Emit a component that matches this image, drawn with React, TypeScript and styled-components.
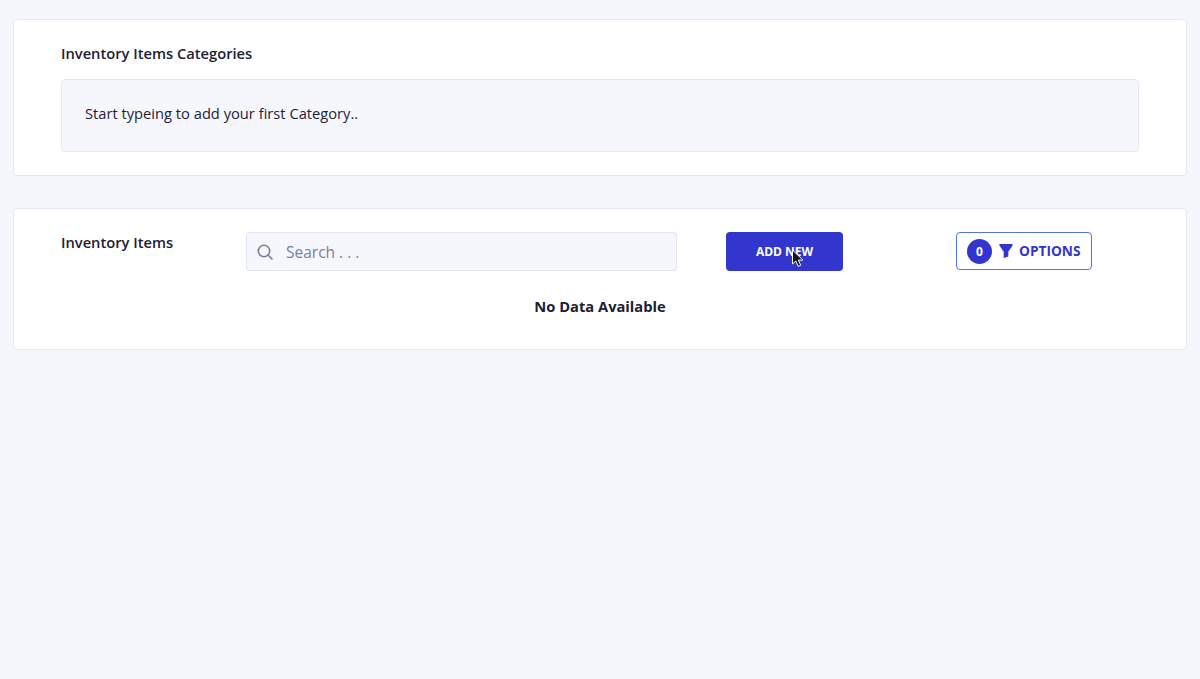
import React from 'react';
import styled, { createGlobalStyle } from 'styled-components';

const GlobalStyle = createGlobalStyle`
  html, body {
    margin: 0;
    height: 100%;
    background: #f6f7fc;
  }
  body {
    font-family: 'Open Sans', 'Noto Sans', sans-serif;
    color: #1c2033;
  }
`;

const Page = styled.div`
  box-sizing: border-box;
  height: 679px;
  padding: 19px 13px 0;
  display: flex;
  flex-direction: column;
  gap: 32px;
  overflow: hidden;
`;

const Card = styled.section<{ $height: number }>`
  box-sizing: border-box;
  height: ${(p) => p.$height}px;
  background: #fff;
  border: 1px solid #e6e8f4;
  border-radius: 4px;
  padding: 0 47px;
`;

const CardTitle = styled.h2`
  margin: 0;
  font-size: 14.7px;
  line-height: 20px;
  font-weight: 600;
  color: #1c2033;
`;

const CategoriesTitle = styled(CardTitle)`
  padding-top: 23px;
`;

const CategoryInput = styled.div`
  box-sizing: border-box;
  height: 73px;
  margin-top: 16px;
  padding: 0 23px 5px;
  display: flex;
  align-items: center;
  background: #f6f7fc;
  border: 1px solid #e6e8f4;
  border-radius: 4px;
  font-size: 14.7px;
  color: #1f2336;
`;

const Toolbar = styled.div`
  display: flex;
  align-items: flex-start;
  padding-top: 23px;
`;

const ToolbarTitle = styled(CardTitle)`
  width: 185px;
  flex-shrink: 0;
`;

const SearchBox = styled.div`
  box-sizing: border-box;
  width: 431px;
  height: 39px;
  padding: 0 10px;
  display: flex;
  align-items: center;
  gap: 13px;
  background: #f6f7fc;
  border: 1px solid #e3e6f2;
  border-radius: 3px;
  font-size: 15.5px;
  color: #76809b;
`;

const AddButton = styled.button`
  box-sizing: border-box;
  width: 117px;
  height: 39px;
  margin-left: 49px;
  padding: 0;
  position: relative;
  border: 0;
  border-radius: 4px;
  background: #3335cf;
  color: #fff;
  font-family: inherit;
  font-size: 12px;
  font-weight: 700;
`;

const Pointer = styled.svg`
  position: absolute;
  left: 65px;
  top: 17px;
`;

const OptionsButton = styled.button`
  box-sizing: border-box;
  width: 136px;
  height: 38px;
  margin-left: 113px;
  padding: 0 10px;
  display: flex;
  align-items: center;
  background: #fff;
  border: 1px solid #4f74e3;
  border-radius: 4px;
  color: #3335cf;
  font-family: inherit;
  font-size: 13.7px;
  font-weight: 700;
`;

const OptionsLabel = styled.span`
  margin-bottom: 2px;
`;

const CountBadge = styled.span`
  width: 25px;
  height: 25px;
  border-radius: 50%;
  background: #3335cf;
  color: #fff;
  font-size: 12px;
  display: flex;
  align-items: center;
  justify-content: center;
  margin-right: 7px;
`;

const FunnelIcon = styled.svg`
  margin-right: 6px;
`;

const EmptyMessage = styled.p`
  margin: 25px 0 0;
  text-align: center;
  font-size: 14.7px;
  line-height: 20px;
  font-weight: 700;
  color: #1c2033;
`;

export default function App() {
  return (
    <>
      <GlobalStyle />
      <Page>
        <Card $height={157}>
          <CategoriesTitle>Inventory Items Categories</CategoriesTitle>
          <CategoryInput>Start typeing to add your first Category..</CategoryInput>
        </Card>
        <Card $height={142}>
          <Toolbar>
            <ToolbarTitle>Inventory Items</ToolbarTitle>
            <SearchBox>
              <svg width="16" height="16" viewBox="0 0 16 16" fill="none" stroke="#76809b" strokeWidth="1.6" strokeLinecap="round">
                <circle cx="7" cy="7" r="5.7" />
                <path d="M11.3 11.3l3.6 3.6" />
              </svg>
              Search . . .
            </SearchBox>
            <AddButton>
              ADD NEW
              <Pointer width="14" height="20" viewBox="0 0 14 20">
                <path d="M1.5 1v14l3.4-3 2.3 5.4 2.5-1.1-2.3-5.2H12z" fill="#15161c" stroke="#fff" strokeWidth="1" />
              </Pointer>
            </AddButton>
            <OptionsButton>
              <CountBadge>0</CountBadge>
              <FunnelIcon width="14" height="14" viewBox="0 0 14 15">
                <path d="M0 0h14v2L9.5 8v5.5L4.5 15V8L0 2z" fill="#3335cf" />
              </FunnelIcon>
              <OptionsLabel>OPTIONS</OptionsLabel>
            </OptionsButton>
          </Toolbar>
          <EmptyMessage>No Data Available</EmptyMessage>
        </Card>
      </Page>
    </>
  );
}
